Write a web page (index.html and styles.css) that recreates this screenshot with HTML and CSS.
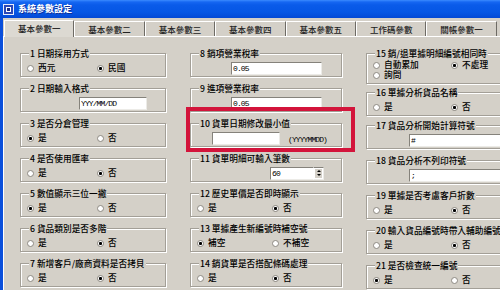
FILE: index.html
```html
<!DOCTYPE html>
<html>
<head>
  <title>系統參數設定</title>
  <meta charset="utf-8">
  <link rel="stylesheet" href="styles.css">
</head>
<body>
  <div class="window">
    <!-- Title bar -->
    <div class="titlebar">
      <svg class="app-icon" viewBox="0 0 11 11" width="11" height="11">
        <rect x="0" y="0" width="11" height="11" fill="#e9eefb"></rect>
        <rect x="1" y="1" width="9" height="9" fill="#2a48b8"></rect>
        <rect x="3" y="3" width="5" height="5" fill="#ffffff"></rect>
        <rect x="4" y="4" width="3" height="3" fill="#1b2e86"></rect>
      </svg>
      <span class="title">系統參數設定</span>
    </div>

    <div class="frame">
      <!-- Tabs -->
      <div class="tabs">
        <div class="tab active">基本參數一</div>
        <div class="tab">基本參數二</div>
        <div class="tab">基本參數三</div>
        <div class="tab">基本參數四</div>
        <div class="tab">基本參數五</div>
        <div class="tab">工作碼參數</div>
        <div class="tab">關帳參數一</div>
      </div>

      <!-- Panel -->
      <div class="panel">
        <div class="col col-a">
          <fieldset>
            <legend>1 日期採用方式</legend>
            <div class="opts">
              <label class="opt"><input type="radio" class="rb" name="g1">西元</label>
              <label class="opt"><input type="radio" class="rb" name="g1" checked>民國</label>
            </div>
          </fieldset>
          <fieldset>
            <legend>2 日期輸入格式</legend>
            <div class="row"><input class="field w68 ml52" value="YYY/MM/DD"></div>
          </fieldset>
          <fieldset>
            <legend>3 是否分倉管理</legend>
            <div class="opts">
              <label class="opt"><input type="radio" class="rb" name="g3" checked>是</label>
              <label class="opt"><input type="radio" class="rb" name="g3">否</label>
            </div>
          </fieldset>
          <fieldset>
            <legend>4 是否使用匯率</legend>
            <div class="opts">
              <label class="opt"><input type="radio" class="rb" name="g4">是</label>
              <label class="opt"><input type="radio" class="rb" name="g4" checked>否</label>
            </div>
          </fieldset>
          <fieldset>
            <legend>5 數值顯示三位一撇</legend>
            <div class="opts">
              <label class="opt"><input type="radio" class="rb" name="g5" checked>是</label>
              <label class="opt"><input type="radio" class="rb" name="g5">否</label>
            </div>
          </fieldset>
          <fieldset>
            <legend>6 貨品類別是否多階</legend>
            <div class="opts">
              <label class="opt"><input type="radio" class="rb" name="g6">是</label>
              <label class="opt"><input type="radio" class="rb" name="g6" checked>否</label>
            </div>
          </fieldset>
          <fieldset>
            <legend>7 新增客戶/廠商資料是否拷貝</legend>
            <div class="opts">
              <label class="opt"><input type="radio" class="rb" name="g7">是</label>
              <label class="opt"><input type="radio" class="rb" name="g7" checked>否</label>
            </div>
          </fieldset>
        </div>

        <div class="col col-b">
          <fieldset>
            <legend>8 銷項營業稅率</legend>
            <div class="row"><input class="field w91 ml34" value="0.05"></div>
          </fieldset>
          <fieldset>
            <legend>9 進項營業稅率</legend>
            <div class="row"><input class="field w91 ml34" value="0.05"></div>
          </fieldset>
          <fieldset>
            <legend>10 貨單日期修改最小值</legend>
            <div class="row">
              <input class="field w68 ml15" value="">
              <span class="hint">(YYYYMMDD)</span>
            </div>
          </fieldset>
          <fieldset>
            <legend>11 貨單明細可輸入筆數</legend>
            <div class="row">
              <div class="spin ml73">
                <div class="field spin-val">60</div>
                <div class="spin-btns"><span class="up"></span><span class="down"></span></div>
              </div>
            </div>
          </fieldset>
          <fieldset>
            <legend>12 歷史單價是否即時顯示</legend>
            <div class="opts">
              <label class="opt"><input type="radio" class="rb" name="g12">是</label>
              <label class="opt"><input type="radio" class="rb" name="g12" checked>否</label>
            </div>
          </fieldset>
          <fieldset>
            <legend>13 單據產生新編號時補空號</legend>
            <div class="opts">
              <label class="opt"><input type="radio" class="rb" name="g13" checked>補空</label>
              <label class="opt"><input type="radio" class="rb" name="g13">不補空</label>
            </div>
          </fieldset>
          <fieldset>
            <legend>14 銷貨單是否搭配條碼處理</legend>
            <div class="opts">
              <label class="opt"><input type="radio" class="rb" name="g14">是</label>
              <label class="opt"><input type="radio" class="rb" name="g14" checked>否</label>
            </div>
          </fieldset>
        </div>

        <div class="col col-c">
          <fieldset class="tall">
            <legend>15 銷/退單據明細編號相同時</legend>
            <div class="opts tight">
              <label class="opt"><input type="radio" class="rb" name="g15">自動累加</label>
              <label class="opt"><input type="radio" class="rb" name="g15" checked>不處理</label>
              <label class="opt"><input type="radio" class="rb" name="g15">詢問</label>
            </div>
          </fieldset>
          <fieldset class="short">
            <legend>16 單據分析貨品名稱</legend>
            <div class="opts">
              <label class="opt"><input type="radio" class="rb" name="g16">是</label>
              <label class="opt"><input type="radio" class="rb" name="g16" checked>否</label>
            </div>
          </fieldset>
          <fieldset class="lift">
            <legend>17 貨品分析開始計算符號</legend>
            <div class="row"><input class="field w110 ml36" value="#"></div>
          </fieldset>
          <fieldset>
            <legend>18 貨品分析不列印符號</legend>
            <div class="row"><input class="field w110 ml36" value=";"></div>
          </fieldset>
          <fieldset>
            <legend>19 單據是否考慮客戶折數</legend>
            <div class="opts">
              <label class="opt"><input type="radio" class="rb" name="g19">是</label>
              <label class="opt"><input type="radio" class="rb" name="g19" checked>否</label>
            </div>
          </fieldset>
          <fieldset>
            <legend>20 輸入貨品編號時帶入輔助編號</legend>
            <div class="opts">
              <label class="opt"><input type="radio" class="rb" name="g20">是</label>
              <label class="opt"><input type="radio" class="rb" name="g20" checked>否</label>
            </div>
          </fieldset>
          <fieldset>
            <legend>21 是否檢查統一編號</legend>
            <div class="opts">
              <label class="opt"><input type="radio" class="rb" name="g21" checked>是</label>
              <label class="opt"><input type="radio" class="rb" name="g21">否</label>
            </div>
          </fieldset>
        </div>

        <!-- Highlight annotation over item 10 -->
        <div class="mark"></div>
      </div>
    </div>
  </div>
</body>
</html>
```

FILE: styles.css
```css
/* Base */
html, body {
  margin: 0;
  padding: 0;
  height: 100%;
  overflow: hidden;
  background: #d4d0c8;
  font-family: "Noto Sans CJK TC", "Noto Sans CJK SC", sans-serif;
  font-weight: 500;
  color: #000;
}
.window {
  width: 524px;
  height: 100%;
  display: flex;
  flex-direction: column;
}
/* Title bar */
.titlebar {
  height: 18px;
  flex-shrink: 0;
  display: flex;
  align-items: center;
  gap: 4px;
  padding-left: 3px;
  background: linear-gradient(#3b8bff 0, #1667f2 2px, #0a5be9 5px, #0657e5 12px, #0349d5 18px);
}
.app-icon {
  display: block;
}
.title {
  color: #fff;
  font-size: 9px;
  font-weight: bold;
  line-height: 18px;
  text-shadow: 1px 1px 0 #0a2f9a;
}
/* Window frame */
.frame {
  flex: 1;
  min-height: 0;
  border-left: 3px solid #0a4fdb;
  display: flex;
  flex-direction: column;
}
/* Tabs */
.tabs {
  display: flex;
  height: 16px;
  flex-shrink: 0;
  margin-top: 2px;
  padding-left: 1px;
}
.tab {
  width: 70.4px;
  box-sizing: border-box;
  margin-top: 1px;
  font-size: 8.5px;
  line-height: 14px;
  text-align: center;
  color: #222;
  border-top: 1px solid #fff;
  border-left: 1px solid #fff;
  border-right: 1px solid #6e6b65;
  background: #d4d0c8;
}
.tab.active {
  margin-top: 0;
  height: 17px;
  position: relative;
  z-index: 1;
  background: #dcd9d2;
}
/* Panel */
.panel {
  flex: 1;
  position: relative;
  display: flex;
  align-items: flex-start;
  gap: 24px;
  padding: 11px 0 0 16px;
  border-top: 1px solid #fff;
  border-left: 1px solid #fff;
}
.col {
  display: flex;
  flex-direction: column;
  gap: 6px;
  flex-shrink: 0;
}
.col-a { width: 146px; }
.col-b { width: 152px; }
.col-c { width: 152px; }

/* Group boxes */
fieldset {
  margin: 0;
  padding: 3px 0 2px 6px;
  min-width: 0;
  border: 1px solid #a39f97;
  box-shadow: inset 1px 1px 0 #fff, 1px 1px 0 #fff;
}
legend {
  font-size: 8.7px;
  line-height: 11px;
  padding: 0 1px;
  margin-left: 2px;
  background: #d4d0c8;
  white-space: nowrap;
}
.opts {
  display: grid;
  grid-template-columns: 70px auto;
}
.col-b .opts { grid-template-columns: 75px auto; }
.col-c .opts { grid-template-columns: 78px auto; }
.opt {
  display: flex;
  align-items: center;
  gap: 4px;
  height: 12px;
  font-size: 8.7px;
  line-height: 12px;
  white-space: nowrap;
}
.opts.tight .opt {
  height: 10px;
  line-height: 10px;
}

fieldset.tall {
  padding-top: 1px;
  padding-bottom: 3px;
}
fieldset.short {
  margin-top: -3px;
}
fieldset.lift {
  margin-top: -2px;
}

/* Radios */
.rb {
  appearance: none;
  -webkit-appearance: none;
  margin: 0;
  width: 7px;
  height: 7px;
  border-radius: 50%;
  box-sizing: border-box;
  border: 1px solid #8d8982;
  background: #fff;
  flex-shrink: 0;
}
.rb:checked {
  background: radial-gradient(circle, #000 0 1.3px, #fff 1.8px);
}

/* Inputs */
.row {
  display: flex;
  align-items: center;
  height: 12px;
}
.field {
  display: block;
  height: 13px;
  box-sizing: border-box;
  margin: 0;
  padding: 0 1px;
  border: 1px solid;
  border-color: #85827b #ecebe7 #ecebe7 #85827b;
  background: #fff;
  font-family: "Liberation Mono", monospace;
  font-size: 8px;
  letter-spacing: -0.9px;
  color: #000;
  outline: none;
}
.w68 { width: 68px; }
.w91 { width: 91px; }
.w110 { width: 110px; }
.ml15 { margin-left: 15px; }
.ml34 { margin-left: 34px; }
.ml36 { margin-left: 36px; }
.ml52 { margin-left: 52px; }
.ml73 { margin-left: 73px; }
.hint {
  margin-left: 8px;
  font-family: "Liberation Mono", monospace;
  font-size: 8px;
  letter-spacing: -0.9px;
  padding-top: 3px;
}

/* Spinner */
.spin {
  display: flex;
  width: 54px;
  height: 13px;
}
.spin-val {
  width: 43px;
  line-height: 11px;
  text-align: left;
  border-right: none;
}
.spin-btns {
  width: 11px;
  display: flex;
  flex-direction: column;
  border: 1px solid;
  border-color: #85827b #ecebe7 #ecebe7 #fff;
  box-sizing: border-box;
  background: #fff;
  padding: 1px;
}
.spin-btns span {
  flex: 1;
  background: #d4d0c8;
  display: flex;
  align-items: center;
  justify-content: center;
}
.spin-btns .up::before {
  content: "";
  border-left: 2px solid transparent;
  border-right: 2px solid transparent;
  border-bottom: 2px solid #000;
}
.spin-btns .down::before {
  content: "";
  border-left: 2px solid transparent;
  border-right: 2px solid transparent;
  border-top: 2px solid #000;
}

/* Red annotation box */
.mark {
  position: absolute;
  left: 182px;
  top: 70px;
  width: 169px;
  height: 45px;
  box-sizing: border-box;
  border: 4px solid #d3143b;
}
```
